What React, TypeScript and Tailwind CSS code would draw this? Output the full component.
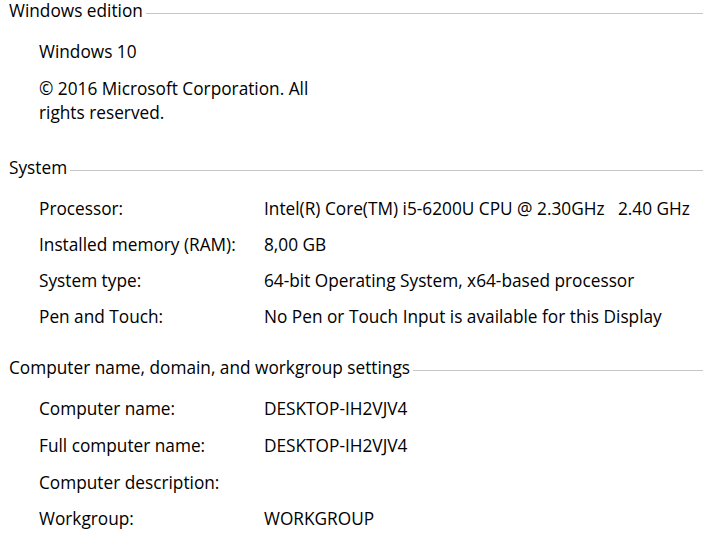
function Header({ title, className = "" }: { title: string; className?: string }) {
  return (
    <div className={"flex items-start pl-[9px] leading-[20px] " + className}>
      <span className="whitespace-nowrap">{title}</span>
      <div className="ml-[3px] mt-[12px] h-px flex-1 bg-[#c6c6c6]" />
    </div>
  );
}

function Row({ label, value, lh }: { label: string; value: string; lh: string }) {
  return (
    <div className={"grid grid-cols-[225px_1fr] whitespace-pre pl-[39px] " + lh}>
      <span>{label}</span>
      <span>{value}</span>
    </div>
  );
}

export default function App() {
  return (
    <div
      className="h-[536px] w-[703px] overflow-hidden bg-white pt-[1px] text-[17.25px] text-black"
      style={{ fontFamily: "'Open Sans', 'Noto Sans', sans-serif" }}
    >
      <Header title="Windows edition" />
      <div className="mt-[12.5px] pl-[39px] leading-[36.67px]">Windows 10</div>
      <div className="mt-[7px] pl-[39px] leading-[24px]">
        © 2016 Microsoft Corporation. All
        <br />
        rights reserved.
      </div>

      <Header title="System" className="mt-[33px]" />
      <div className="mt-[12.5px]">
        <Row lh="leading-[36px]" label="Processor:" value="Intel(R) Core(TM) i5-6200U CPU @ 2.30GHz   2.40 GHz" />
        <Row lh="leading-[36px]" label="Installed memory (RAM):" value="8,00 GB" />
        <Row lh="leading-[36px]" label="System type:" value="64-bit Operating System, x64-based processor" />
        <Row lh="leading-[36px]" label="Pen and Touch:" value="No Pen or Touch Input is available for this Display" />
      </div>

      <Header title="Computer name, domain, and workgroup settings" className="mt-[23.5px]" />
      <div className="mt-[13px]">
        <Row lh="leading-[36.67px]" label="Computer name:" value="DESKTOP-IH2VJV4" />
        <Row lh="leading-[36.67px]" label="Full computer name:" value="DESKTOP-IH2VJV4" />
        <Row lh="leading-[36.67px]" label="Computer description:" value="" />
        <Row lh="leading-[36.67px]" label="Workgroup:" value="WORKGROUP" />
      </div>
    </div>
  );
}
